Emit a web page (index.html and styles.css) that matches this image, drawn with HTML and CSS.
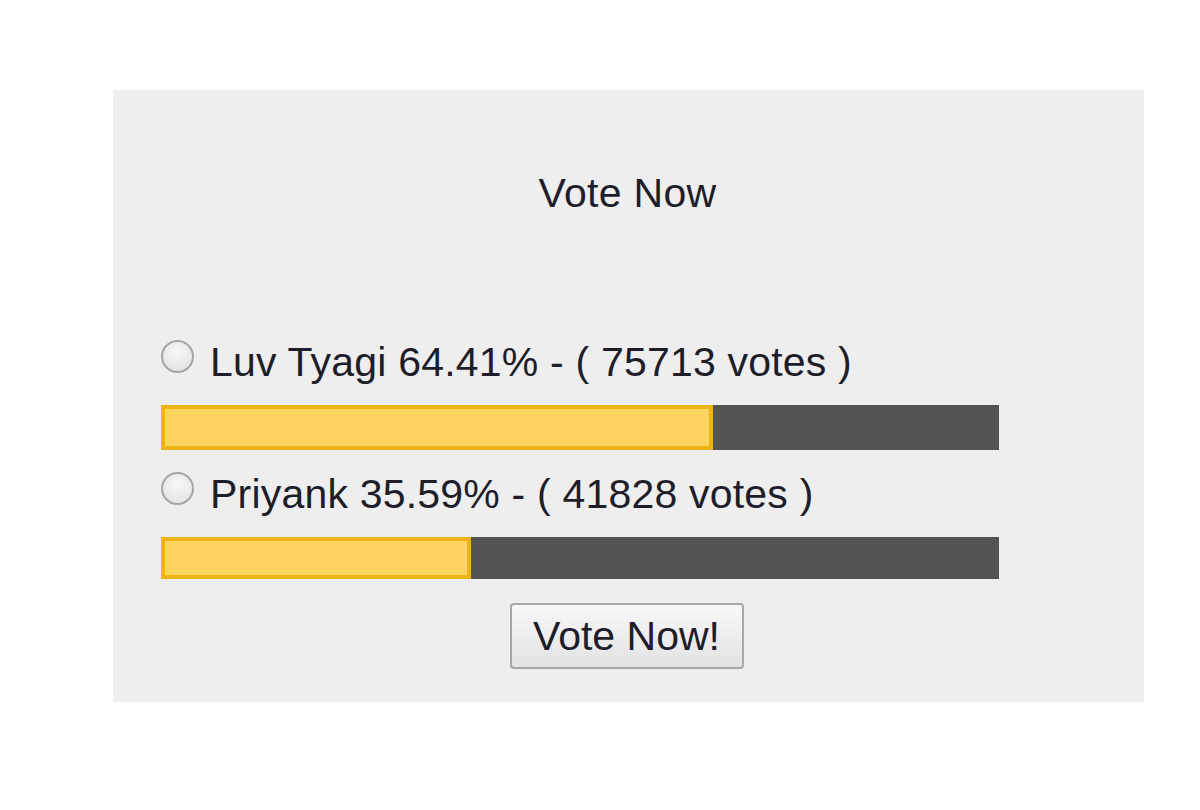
FILE: index.html
```html
<!DOCTYPE html>
<html lang="en">
<head>
    <meta charset="UTF-8">
    <title>Vote Now</title>
    <link rel="stylesheet" href="styles.css">
</head>
<body>
    <div class="poll">
        <h2 class="poll-title">Vote Now</h2>

        <form class="poll-options">
            <div class="option">
                <label class="option-label">
                    <input type="radio" name="vote" value="luv">
                    <span>Luv Tyagi 64.41% - ( 75713 votes )</span>
                </label>
                <div class="bar">
                    <div class="bar-fill" style="width: calc(64.41% + 12px);"></div>
                </div>
            </div>

            <div class="option">
                <label class="option-label">
                    <input type="radio" name="vote" value="priyank">
                    <span>Priyank 35.59% - ( 41828 votes )</span>
                </label>
                <div class="bar">
                    <div class="bar-fill" style="width: calc(35.59% + 12px);"></div>
                </div>
            </div>

            <div class="actions">
                <button type="button" class="vote-btn">Vote Now!</button>
            </div>
        </form>
    </div>
</body>
</html>
```

FILE: styles.css
```css
* {
    box-sizing: border-box;
    margin: 0;
    padding: 0;
}
body {
    font-family: "Liberation Sans", Arial, sans-serif;
    background-color: #ffffff;
    color: #1e1e2a;
}
.poll {
    width: 1031px;
    margin: 90px 0 0 113px;
    padding: 80px 145px 33px 48px;
    background-color: #eeeeee;
}
.poll-title {
    font-size: 41px;
    font-weight: normal;
    line-height: 47px;
    letter-spacing: 0.3px;
    text-align: center;
    margin-left: 95px;
}
.poll-options {
    margin-top: 122px;
}
.option + .option {
    margin-top: 21px;
}
.option-label {
    display: flex;
    align-items: center;
    gap: 16px;
    font-size: 41px;
    line-height: 47px;
    letter-spacing: 0.2px;
}
.option-label input {
    appearance: none;
    -webkit-appearance: none;
    width: 33px;
    height: 33px;
    border-radius: 50%;
    border: 2px solid #a6a6a6;
    background: radial-gradient(circle at 50% 35%, #f8f8f8 0%, #e6e6e6 70%, #d8d8d8 100%);
    flex-shrink: 0;
    margin-top: -12px;
}
.bar {
    margin-top: 19px;
    height: 45px;
    background-color: #545454;
}
.option + .option .bar {
    height: 42px;
}
.bar-fill {
    height: 100%;
    background-color: #fcd45f;
    border: 4px solid #ecb414;
}
.actions {
    margin-top: 24px;
    display: flex;
    justify-content: center;
    margin-left: 93px;
}
.vote-btn {
    width: 234px;
    height: 66px;
    font-family: "Liberation Sans", Arial, sans-serif;
    font-size: 41px;
    color: #1e1e2a;
    background: linear-gradient(#f8f8f8, #e2e2e2);
    border: 2px solid #a8a8a8;
    border-radius: 4px;
    cursor: pointer;
}
```
